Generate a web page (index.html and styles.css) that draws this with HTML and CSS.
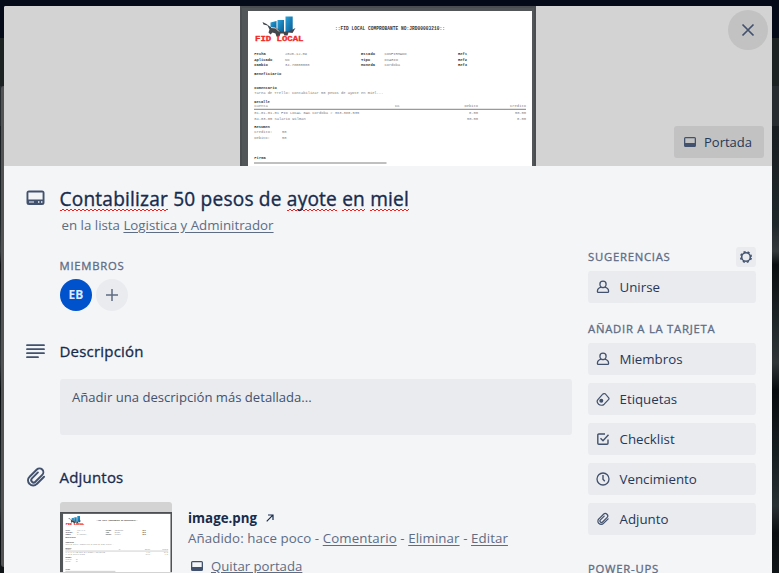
FILE: index.html
```html
<!DOCTYPE html>
<html lang="es">
<head>
<meta charset="utf-8">
<title>Contabilizar 50 pesos de ayote en miel</title>
<link rel="stylesheet" href="styles.css">
</head>
<body>
<svg class="defs" width="0" height="0" aria-hidden="true">
  <defs>
    <linearGradient id="bar" x1="0" y1="0" x2="1" y2="1"><stop offset="0" stop-color="#2aa3d8"/><stop offset="1" stop-color="#075a94"/></linearGradient>
  </defs>
  <symbol id="receipt" viewBox="0 0 296 160">
    <rect width="296" height="160" fill="#4b4e51"/>
    <rect x="2" y="2" width="292" height="158" fill="#525659"/>
    <rect x="8" y="5" width="284" height="155" fill="#fff"/>
    <g fill="url(#bar)"><path d="M30.500 16.500l6-1.500v9l-6-1z"/><path d="M37.500 14h6.500v12h-6.500z"/><path d="M45.500 10.500h7.200v14l-7.200 2z"/></g>
    <path d="M22.500 16l4 2 4 3 6 1 5 4 8-1 6-3-3 5-4-.5-1 3h-3l-1-2-3 0-1 3h-3l-1-3-3-1-2 2-2-2 1-3-2-4-4-1z" fill="#41474c"/>
    <path d="M31 21.500q5-1 8 4" fill="none" stroke="#d8dadb" stroke-width="1"/>
    <text class="doc-logo" x="15" y="34.500" textLength="48.500" lengthAdjust="spacingAndGlyphs">FID LOCAL</text>
    <g class="doc-text">
      <g class="doc-bold">
        <text class="doc-title" x="95" y="24" textLength="110">::FID LOCAL COMPROBANTE NO:JRD00003210::</text>
        <text x="14.300" y="49" textLength="11.500">Fecha</text><text x="14.300" y="54.700" textLength="18">Aplicado</text><text x="14.300" y="60.400" textLength="13.500">Cambio</text>
        <text x="121" y="49" textLength="14">Estado</text><text x="121" y="54.700" textLength="9">Tipo</text><text x="121" y="60.400" textLength="14">Moneda</text>
        <text x="218" y="49" textLength="9">Ref1</text><text x="218" y="54.700" textLength="9">Ref2</text><text x="218" y="60.400" textLength="9">Ref3</text>
        <text x="14.300" y="69" textLength="27">Beneficiario</text><text x="14.300" y="83" textLength="22.500">Comentario</text><text x="14.300" y="96.600" textLength="15.500">Detalle</text><text x="14.300" y="122.400" textLength="15.500">Resumen</text><text x="14.300" y="153.300" textLength="11.500">Firma</text>
      </g>
      <text x="45" y="49" textLength="22">2020-12-09</text><text x="45" y="54.700" textLength="4.500">No</text><text x="45" y="60.400" textLength="24.500">34.78000000</text>
      <text x="144.500" y="49" textLength="22">CONFIRMADO</text><text x="144.500" y="54.700" textLength="13.500">DIARIO</text><text x="144.500" y="60.400" textLength="15.500">Cordoba</text>
      <text x="14.300" y="87.700" textLength="129">Tarea de Trello: Contabilizar 50 pesos de ayote en miel...</text>
      <text x="14.300" y="101.300" textLength="13.500">Cuenta</text><text x="155" y="101.300" textLength="4.500">CC</text><text x="224.500" y="101.300" textLength="13.500">Debito</text><text x="270" y="101.300" textLength="16">Credito</text>
      <text x="14.300" y="107.700" textLength="105">01-01-01-01 FID LOCAL BAC Cordoba # 363-380-535</text><text x="14.300" y="113.700" textLength="51.500">04-03-05 Salario Wilman</text>
      <text x="229" y="107.700" textLength="9">0.00</text><text x="227" y="113.700" textLength="11">50.00</text><text x="275" y="107.700" textLength="11">50.00</text><text x="277" y="113.700" textLength="9">0.00</text>
      <text x="14.300" y="127.200" textLength="18">Credito:</text><text x="42" y="127.200" textLength="4.500">50</text><text x="14.300" y="132.800" textLength="15.500">Debito:</text><text x="42" y="132.800" textLength="4.500">50</text>
    </g>
    <path d="M14 103.300h272M14 157h132.500" stroke="#737373" stroke-width=".9"/>
  </symbol>
  <symbol id="cover" viewBox="0 0 12 10"><path fill-rule="evenodd" d="M1.500 0h9A1.500 1.500 0 0112 1.500v7a1.500 1.500 0 01-1.500 1.500h-9A1.500 1.500 0 010 8.500v-7A1.500 1.500 0 011.500 0zM1.300 1.300v4.800h9.400V1.300z" fill="currentColor"/></symbol>
  <symbol id="person" viewBox="0 0 14 14"><g fill="none" stroke="currentColor" stroke-width="1.300"><path d="M5.300 7.400C4.400 6.800 3.900 5.400 3.900 4.200a3.100 3.100 0 016.200 0c0 1.200-.5 2.600-1.400 3.200M5.300 7.200C2.800 7.700 1.400 9.200 1.400 11.400c0 .7.300 1 1 1h9.200c.7 0 1-.3 1-1 0-2.200-1.400-3.700-3.900-4.200"/><path d="M5.200 7.100q1.800 1.200 3.600 0"/></g></symbol>
  <symbol id="clip" viewBox="0 0 24 24"><path fill="none" stroke="currentColor" stroke-width="2.100" stroke-linecap="round" d="M20.800 11.700l-7.900 7.900a5.300 5.300 0 01-7.900 0 5.300 5.300 0 010-7.900l7.900-7.900a4.100 4.100 0 015.900 5.900l-7.500 7.500a2.600 2.600 0 01-3.700-3.700l6.500-6.500"/></symbol>
</svg>

<div class="board">
  <div class="board-header"></div><div class="board-bar"></div><div class="board-strip"></div><div class="board-canvas"></div>
</div>

<main class="card">
  <div class="card-cover">
    <svg class="cover-image"><use href="#receipt"/></svg>
    <button class="close" aria-label="Cerrar"><svg width="14" height="14" viewBox="0 0 14 14"><path d="M1.500 1.500l11 11M12.500 1.500l-11 11" stroke="currentColor" stroke-width="1.700" fill="none"/></svg></button>
    <button class="cover-button"><svg width="12" height="10"><use href="#cover"/></svg><span>Portada</span></button>
  </div>

  <div class="card-body">
    <header class="card-head">
      <svg class="head-icon" width="19" height="16" viewBox="0 0 19 16"><path fill="currentColor" fill-rule="evenodd" d="M3 .5h13A2.500 2.500 0 0118.500 3v9.500A2.500 2.500 0 0116 15H3A2.500 2.500 0 01.500 12.500V3A2.500 2.500 0 013 .500zM2.400 2.400v7h14.200v-7zM3 11.500v1h5v-1zM12 11.300v1.400h1.400v-1.400zM15 11.300v1.400h1.400v-1.400z"/></svg>
      <div>
        <h1><span class="misspelt">Contabilizar</span> 50 pesos de <span class="misspelt">ayote</span> <span class="misspelt">en</span> <span class="misspelt">miel</span></h1>
        <p class="in-list">en la lista <a>Logistica y Adminitrador</a></p>
      </div>
    </header>

    <div class="columns">
      <div class="main-column">
        <section class="members">
          <h3>Miembros</h3>
          <div class="avatars"><span class="avatar">EB</span><span class="avatar add"><svg width="12" height="12" viewBox="0 0 12 12"><path d="M6 0v12M0 6h12" stroke="currentColor" stroke-width="1.500"/></svg></span></div>
        </section>
        <section class="description">
          <div class="section-title"><svg width="19" height="15" viewBox="0 0 19 15"><path d="M1 1.200h17M1 5.200h17M1 9.200h17M1 13.200h11" stroke="currentColor" stroke-width="1.800" stroke-linecap="round"/></svg><h2>Descripción</h2></div>
          <div class="description-box">Añadir una descripción más detallada...</div>
        </section>
        <section class="attachments">
          <div class="section-title"><svg class="clip-large" width="22" height="22"><use href="#clip"/></svg><h2>Adjuntos</h2></div>
          <div class="attachment">
            <div class="thumb"><svg width="112" height="60.500"><use href="#receipt"/></svg></div>
            <div class="attachment-info">
              <div class="file-name"><b>image.png</b><svg width="8" height="8" viewBox="0 0 8 8"><path d="M.7 7.300L6.800 1.200M2 1h5v5" fill="none" stroke="currentColor" stroke-width="1.200"/></svg></div>
              <div class="file-meta">Añadido: hace poco - <a>Comentario</a> - <a>Eliminar</a> - <a>Editar</a></div>
              <div class="remove-cover"><svg width="12" height="10"><use href="#cover"/></svg><a>Quitar portada</a></div>
            </div>
          </div>
        </section>
      </div>

      <aside class="sidebar">
        <div class="suggestions-title"><h3>Sugerencias</h3><span class="gear"><svg width="14" height="14" viewBox="0 0 14 14"><g fill="none" stroke="currentColor"><circle cx="7" cy="7" r="4.300" stroke-width="1.500"/><circle cx="7" cy="7" r="5.300" stroke-width="1.500" stroke-dasharray="2.100 2.063" stroke-dashoffset="-1"/></g></svg></span></div>
        <a class="action"><svg><use href="#person"/></svg><span>Unirse</span></a>
        <h3 class="add-title">Añadir a la tarjeta</h3>
        <div class="actions">
          <a class="action"><svg><use href="#person"/></svg><span>Miembros</span></a>
          <a class="action"><svg viewBox="0 0 14 14"><path d="M1.900 7.700L6.500 2.300c.4-.5 1-.7 1.700-.7l1 .1 3.500 4.200c.4.500.4 1 0 1.500l-4.500 4.800c-1.500 1.400-4.100 1.300-5.600 0-1.400-1.300-1.800-3.200-.7-4.500z" fill="none" stroke="currentColor" stroke-width="1.200"/><circle cx="5.300" cy="8.700" r="2" fill="currentColor"/></svg><span>Etiquetas</span></a>
          <a class="action"><svg viewBox="0 0 14 14"><path d="M9 2H2.800c-.6 0-1 .4-1 1v8.200c0 .6.4 1 1 1H11c.6 0 1-.4 1-1V7.500M4.500 6.300L7 8.800l5.500-6" fill="none" stroke="currentColor" stroke-width="1.400"/></svg><span>Checklist</span></a>
          <a class="action"><svg viewBox="0 0 14 14"><circle cx="7" cy="7" r="6" fill="none" stroke="currentColor" stroke-width="1.300"/><path d="M7 3v4.300l1.800 1.900" fill="none" stroke="currentColor" stroke-width="1.400"/></svg><span>Vencimiento</span></a>
          <a class="action"><svg><use href="#clip"/></svg><span>Adjunto</span></a>
        </div>
        <h3 class="power-title">Power-Ups</h3>
      </aside>
    </div>
  </div>
</main>
</body>
</html>
```
FILE: styles.css
```css
* { box-sizing: border-box; }
html { overflow: hidden; }
body { margin: 0; height: 573px; overflow: hidden; position: relative; background: #101416; font: 13.3px/20px "Open Sans", "Noto Sans", sans-serif; color: #172b4d; }
h1, h2, h3, p { margin: 0; }
button { border: 0; padding: 0; font: inherit; color: inherit; }
svg { display: block; flex: none; }
a { color: inherit; }
.defs { position: absolute; }
.board { position: absolute; inset: 0; display: flex; flex-direction: column; }
.board-header { height: 38px; background: #040a18; }
.board-bar { height: 48px; background: #1c2122; }
.board-strip { height: 40px; background: #262c2f; }
.board-canvas { flex: 1; background: linear-gradient(#171d20 0, #20272a 22%, #343a3c 28%, #0b0e11 31%, #1d2427 43%, #303638 53%, #080c0f 59%, #171e21 73%, #293033 85%, #0a0e10 91%, #101517); }
.board::after { content: ""; position: absolute; left: 1px; top: 86px; width: 6px; height: 481px; background: #545353; border-radius: 3px; }

.card { position: relative; width: 768px; height: 567px; margin: 0 0 0 4px; top: 6px; background: #f4f5f7; border-radius: 2px 2px 0 0; overflow: hidden; }
.card-cover { position: relative; height: 160px; background: #d3d3d3; display: flex; justify-content: center; }
.cover-image { width: 296px; height: 160px; }
.doc-text { font: 3.8px "Liberation Mono", monospace; fill: #808080; }
.doc-bold { font-weight: bold; fill: #333; }
.doc-title { font-size: 4.5px; }
.doc-logo { font: bold 7px "Liberation Mono", monospace; fill: #f02a2a; stroke: #f02a2a; stroke-width: .3px; }
.close { position: absolute; right: 4px; top: 4px; width: 40px; height: 40px; border-radius: 50%; background: #c2c2c2; color: #42526e; display: grid; place-items: center; }
.cover-button { position: absolute; right: 8px; bottom: 8px; width: 90px; height: 32px; border-radius: 3px; background: #c2c2c2; display: flex; align-items: center; padding-left: 10px; gap: 8px; font-size: 13px; }
.cover-button span, .action span { color: #253858; }
.cover-button svg, .remove-cover svg { color: #42526e; }

.card-body { padding: 0 16px 0 22px; }
.card-head { display: flex; height: 75px; padding-top: 21px; }
.head-icon { margin: 3px 14.5px 0 0; color: #42526e; }
h1 { font-size: 19.100px; line-height: 24px; font-weight: 400; letter-spacing: .2px; -webkit-text-stroke: .35px currentColor; }
.misspelt { background: linear-gradient(135deg, transparent 35%, #f02020 35% 62%, transparent 62%) 0 23px / 4px 2px repeat-x, linear-gradient(45deg, transparent 35%, #f02020 35% 62%, transparent 62%) 2px 23px / 4px 2px repeat-x; padding-bottom: 1px; }
.in-list { color: #5e6c84; padding: 4px 0 0 2px; line-height: 20px; }
.columns { display: flex; justify-content: space-between; }
.main-column { width: 546px; }
h3 { font-size: 11.300px; line-height: 20px; font-weight: 400; color: #5e6c84; text-transform: uppercase; letter-spacing: .75px; -webkit-text-stroke: .3px currentColor; }
.members { padding: 15px 0 0 33.5px; }
.avatars { display: flex; gap: 4px; margin: 3px 0 0 .5px; }
.avatar { width: 32px; height: 32px; border-radius: 50%; background: #0052cc; color: #deebff; font-size: 12px; font-weight: 700; display: grid; place-items: center; }
.avatar.add { background: #eaebef; color: #5e6c84; }
.section-title { display: flex; align-items: center; height: 32px; color: #42526e; }
.section-title svg { margin-right: 14.5px; }
.section-title .clip-large { margin: 0 13px 0 -1.5px; }
h2 { font-size: 15px; line-height: 20px; font-weight: 400; color: #172b4d; letter-spacing: .2px; -webkit-text-stroke: .3px currentColor; }
.description { margin-top: 24px; }
.description-box { margin: 12px 0 0 34px; height: 56px; border-radius: 3px; background: #eaebef; padding: 8px 12px; color: #42526e; font-size: 13.100px; }
.attachments { margin-top: 26px; }
.attachment { display: flex; margin: 9px 0 0 34px; }
.thumb { width: 112px; height: 80px; border-radius: 3px; background: #d3d3d3; display: flex; align-items: center; overflow: hidden; }
.attachment-info { padding: 6px 0 0 16px; color: #5e6c84; }
.file-name { display: flex; align-items: center; gap: 9px; color: #172b4d; }
.file-meta { letter-spacing: .08px; }
.attachment-info a, .in-list a { text-decoration: underline; text-underline-offset: 2px; }
.remove-cover { display: flex; align-items: center; gap: 8px; padding: 8px 0 0 3px; font-size: 13.200px; }
.attachment-info .remove-cover a { text-underline-offset: 1px; }

.sidebar { width: 168px; padding-top: 6px; }
.suggestions-title { display: flex; justify-content: space-between; height: 24px; }
.gear { width: 20px; height: 20px; border-radius: 3px; background: #eaebef; display: grid; place-items: center; color: #42526e; }
.action { display: flex; align-items: center; height: 32px; border-radius: 3px; background: #eaebef; padding-left: 8px; gap: 9px; }
.action svg { width: 14px; height: 14px; margin-right: .5px; color: #42526e; }
.add-title { margin: 16px 0 4px; }
.actions { display: grid; gap: 8px; }
.power-title { margin-top: 24px; }
```
